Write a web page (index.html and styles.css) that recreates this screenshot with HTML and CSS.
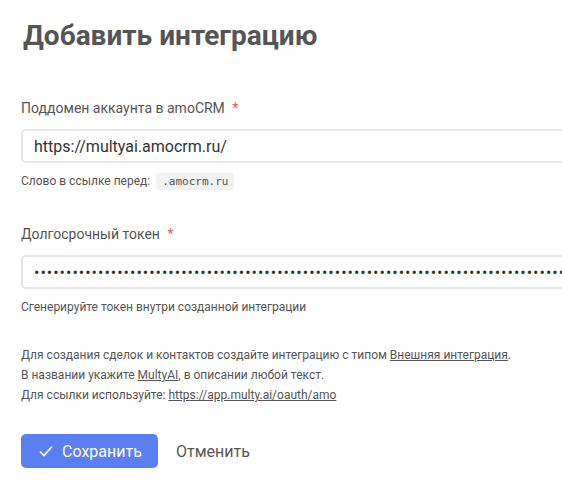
FILE: index.html
```html
<!DOCTYPE html>
<html lang="ru">
<head>
    <meta charset="UTF-8">
    <title>Добавить интеграцию</title>
    <link rel="stylesheet" href="styles.css">
</head>
<body>
<div class="page">
    <h1 class="title">Добавить интеграцию</h1>

    <div class="field">
        <label class="label" for="subdomain">Поддомен аккаунта в amoCRM <span class="req">*</span></label>
        <input class="input" type="text" id="subdomain" value="https://multyai.amocrm.ru/">
        <p class="hint">Слово в ссылке перед: <code>.amocrm.ru</code></p>
    </div>

    <div class="field">
        <label class="label" for="token">Долгосрочный токен <span class="req">*</span></label>
        <input class="input input-token" type="password" id="token" value="eyJ0eXAiOiJKV1QiLCJhbGciOiJSUzI1NiIsImp0aSI6ImE4YzM2ZTdmYjE2ZWI0YzFjNzU2ZjE5ZTc0YjM1eyJ0eXAiOiJKV1QiLCJhbGciOiJSUzI1NiIsImp0aSI6ImE4YzM2ZTdmYjE2ZWI0YzFj">
        <p class="hint">Сгенерируйте токен внутри созданной интеграции</p>
    </div>

    <p class="note">
        Для создания сделок и контактов создайте интеграцию с типом <a href="#">Внешняя интеграция</a>.<br>
        В названии укажите <a href="#">MultyAI</a>, в описании любой текст.<br>
        Для ссылки используйте: <a href="#">https://app.multy.ai/oauth/amo</a>
    </p>

    <div class="actions">
        <button class="btn btn-primary">
            <svg width="16" height="16" viewBox="0 0 16 16"><polyline points="2,8.5 6,12.5 14,3.5" fill="none" stroke="#fff" stroke-width="1.6"/></svg>
            Сохранить
        </button>
        <button class="btn btn-link">Отменить</button>
    </div>
</div>
</body>
</html>
```

FILE: styles.css
```css
body {
    margin: 0;
    font-family: Roboto, "Liberation Sans", sans-serif;
    background: #fff;
    color: #555;
    overflow: hidden;
}
.page {
    padding: 18px 0 0 21px;
    overflow: hidden;
}
.title {
    margin: 0 0 0 2px;
    font-size: 28px;
    line-height: 36px;
    font-weight: 700;
    color: #555;
}
.field {
    margin-top: 44px;
}
.field + .field {
    margin-top: 33px;
}
.label {
    display: block;
    font-size: 14px;
    line-height: 20px;
    color: #555;
}
.req {
    color: #e8595c;
    margin-left: 4px;
}
.input {
    display: block;
    box-sizing: border-box;
    width: 620px;
    height: 34px;
    margin-top: 11px;
    padding: 0 11px;
    border: 2px solid #e6e6e6;
    border-radius: 5px;
    font-family: Roboto, "Liberation Sans", sans-serif;
    font-size: 16px;
    color: #333;
    outline: none;
}
.input-token {
    font-size: 16px;
    letter-spacing: 1px;
    color: #333;
}
.hint {
    margin: 9px 0 0;
    font-size: 12px;
    line-height: 18px;
    color: #555;
}
.hint code {
    font-family: "DejaVu Sans Mono", "Liberation Mono", monospace;
    font-size: 11px;
    background: #f2f2f2;
    color: #555;
    padding: 2px 6px;
    border-radius: 3px;
    margin-left: 3px;
}
.note {
    margin: 29px 0 0;
    font-size: 12px;
    line-height: 20px;
    color: #555;
}
.note a {
    color: #555;
    text-decoration: underline;
}
.actions {
    display: flex;
    align-items: center;
    gap: 8px;
    margin-top: 29px;
}
.btn {
    height: 34px;
    border: none;
    border-radius: 5px;
    font-family: Roboto, "Liberation Sans", sans-serif;
    font-size: 16px;
    cursor: pointer;
}
.btn-primary {
    display: flex;
    align-items: center;
    gap: 8px;
    width: 137px;
    padding: 0 0 0 17px;
    background: #5b7ff0;
    color: #fff;
}
.btn-link {
    background: none;
    color: #555;
    padding: 0 10px;
}
```
